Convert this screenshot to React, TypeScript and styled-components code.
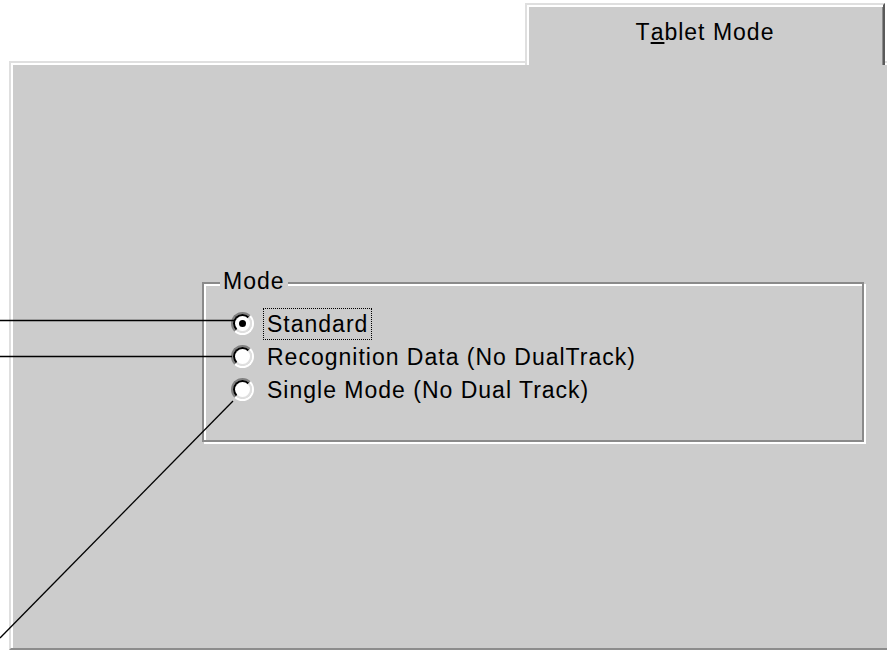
import styled, { createGlobalStyle } from "styled-components";

const GlobalStyle = createGlobalStyle`
  html, body {
    margin: 0;
    padding: 0;
    background: #ffffff;
  }
  * {
    box-sizing: border-box;
  }
`;

const options = [
  { label: "Standard", checked: true },
  { label: "Recognition Data (No DualTrack)", checked: false },
  { label: "Single Mode (No Dual Track)", checked: false },
];

const App = () => {
  return (
    <Page>
      <GlobalStyle />
      <TabStrip>
        <Tab>
          T<u>a</u>blet Mode
        </Tab>
      </TabStrip>
      <Panel>
        <GroupBox>
          <Legend>Mode</Legend>
          <RadioList>
            {options.map((o) => (
              <RadioRow key={o.label}>
                <Radio $checked={o.checked} />
                <RadioLabel $focused={o.checked}>{o.label}</RadioLabel>
              </RadioRow>
            ))}
          </RadioList>
        </GroupBox>
      </Panel>
      <Leaders width="887" height="653" viewBox="0 0 887 653">
        <line x1="0" y1="320.5" x2="234" y2="320.5" />
        <line x1="0" y1="356.5" x2="232" y2="356.5" />
        <line x1="0" y1="638" x2="233" y2="401" />
      </Leaders>
    </Page>
  );
};

export default App;

const Page = styled.div`
  position: relative;
  width: 887px;
  height: 653px;
  overflow: hidden;
  background: #ffffff;
  font-family: "Liberation Sans", Arial, sans-serif;
  font-size: 23px;
  letter-spacing: 1px;
  color: #000000;
`;

const TabStrip = styled.div`
  display: flex;
  padding: 3px 0 0 525px;
`;

const Tab = styled.div`
  position: relative;
  z-index: 1;
  width: 360px;
  height: 62px;
  margin-bottom: -4px;
  display: flex;
  align-items: center;
  justify-content: center;
  padding-bottom: 6px;
  background: #cccccc;
  border-left: 2px solid #dfdfdf;
  border-top: 2px solid #dfdfdf;
  border-right: 2px solid #5a5a5a;
  box-shadow: inset 2px 2px 0 #ffffff, inset -1px 0 0 #8c8c8c;

  u {
    text-decoration-thickness: 2px;
    text-underline-offset: 2px;
  }
`;

const Panel = styled.div`
  margin-left: 9px;
  width: 900px;
  height: 589px;
  padding: 219px 0 0 191px;
  background: #cccccc;
  border-top: 2px solid #dfdfdf;
  border-left: 2px solid #dfdfdf;
  border-bottom: 2px solid #8c8c8c;
  box-shadow: inset 2px 2px 0 #ffffff;
`;

const GroupBox = styled.div`
  position: relative;
  width: 662px;
  height: 160px;
  border: 2px solid #8a8a8a;
  box-shadow: inset 2px 2px 0 #ffffff, 2px 2px 0 #ffffff;
`;

const Legend = styled.span`
  position: absolute;
  top: -15px;
  left: 16px;
  padding: 0 3px;
  line-height: 24px;
  background: #cccccc;
`;

const RadioList = styled.div`
  display: flex;
  flex-direction: column;
  padding: 23px 0 0 27px;
`;

const RadioRow = styled.div`
  display: flex;
  align-items: center;
  gap: 10px;
  height: 33px;
`;

const Radio = styled.span<{ $checked: boolean }>`
  position: relative;
  flex: none;
  width: 23px;
  height: 23px;
  border-radius: 50%;
  border: 2px solid;
  border-color: #808080 #ffffff #ffffff #808080;

  &::before {
    content: "";
    position: absolute;
    inset: 0;
    border-radius: 50%;
    border: 2px solid;
    border-color: #000000 #dfdfdf #dfdfdf #000000;
    background: #ffffff;
  }

  &::after {
    content: "";
    display: ${({ $checked }) => ($checked ? "block" : "none")};
    position: absolute;
    top: 50%;
    left: 50%;
    width: 7px;
    height: 7px;
    margin: -3.5px 0 0 -3.5px;
    border-radius: 50%;
    background: #000000;
  }
`;

const RadioLabel = styled.span<{ $focused: boolean }>`
  padding: 0 3px;
  line-height: 30px;
  outline: ${({ $focused }) => ($focused ? "1px dotted #000000" : "none")};
`;

const Leaders = styled.svg`
  position: absolute;
  top: 0;
  left: 0;
  pointer-events: none;
  z-index: 2;

  line {
    stroke: #000000;
    stroke-width: 1.3;
  }
`;
